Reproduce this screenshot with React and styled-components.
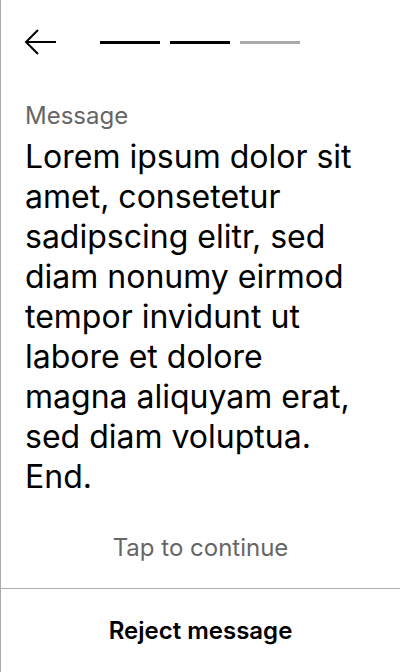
import React from "react";
import styled, { createGlobalStyle } from "styled-components";

const Global = createGlobalStyle`
  html, body { margin: 0; padding: 0; background: #fff; }
  body { font-family: Inter, "Noto Sans", sans-serif; -webkit-font-smoothing: antialiased; }
  * { box-sizing: border-box; }
`;

const Screen = styled.div`
  width: 400px;
  height: 672px;
  border-left: 1px solid #aaa;
  display: flex;
  flex-direction: column;
  background: #fff;
`;

const Header = styled.div`
  display: flex;
  align-items: center;
  height: 84px;
  padding: 0 23px;
  gap: 44px;
  flex-shrink: 0;
`;

const BackButton = styled.button`
  border: none;
  background: none;
  padding: 0;
  width: 32px;
  height: 28px;
  display: flex;
  align-items: center;
  cursor: pointer;
`;

const Steps = styled.div`
  display: flex;
  gap: 10px;
`;

const Step = styled.div`
  width: 60px;
  height: 3px;
  background: ${(p) => (p.$done ? "#000" : "#aaa")};
`;

const Body = styled.div`
  flex: 1;
  padding: 17px 32px 0 24px;
  display: flex;
  flex-direction: column;
`;

const Label = styled.div`
  font-size: 24px;
  line-height: 30px;
  color: #666;
`;

const MessageText = styled.div`
  font-size: 32px;
  line-height: 40px;
  color: #000;
  margin-top: 6px;
`;

const Hint = styled.div`
  text-align: center;
  font-size: 24px;
  line-height: 30px;
  color: #666;
  padding-bottom: 25px;
  flex-shrink: 0;
`;

const Footer = styled.button`
  border: none;
  border-top: 1px solid #aaa;
  background: #fff;
  height: 84px;
  flex-shrink: 0;
  font-family: inherit;
  font-size: 24px;
  font-weight: 600;
  color: #000;
  cursor: pointer;
`;

export default function App() {
  return (
    <>
      <Global />
      <Screen>
        <Header>
          <BackButton aria-label="Back">
            <svg width="32" height="28" viewBox="0 0 32 28" fill="none" stroke="#000" strokeWidth="2">
              <path d="M2 14H32" />
              <path d="M14 2L2 14L14 26" />
            </svg>
          </BackButton>
          <Steps>
            <Step $done />
            <Step $done />
            <Step />
          </Steps>
        </Header>
        <Body>
          <Label>Message</Label>
          <MessageText>
            Lorem ipsum dolor sit amet, consetetur sadipscing elitr, sed diam nonumy eirmod tempor invidunt ut labore et dolore magna aliquyam erat, sed diam voluptua. End.
          </MessageText>
        </Body>
        <Hint>Tap to continue</Hint>
        <Footer>Reject message</Footer>
      </Screen>
    </>
  );
}
